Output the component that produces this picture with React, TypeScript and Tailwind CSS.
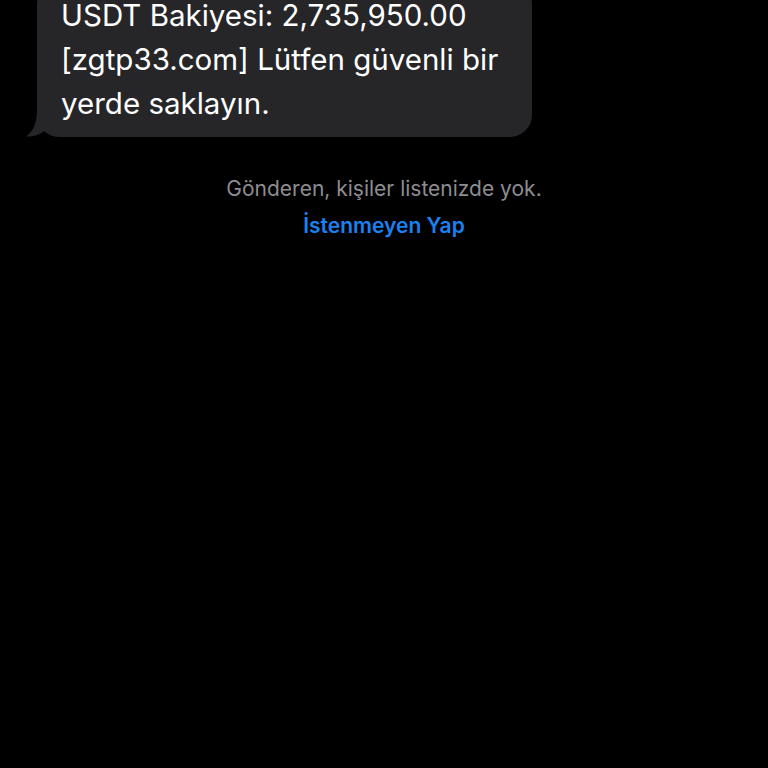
export default function App() {
  return (
    <div className="w-[768px] h-[768px] bg-black overflow-hidden font-['Inter','Liberation_Sans',Arial,sans-serif]">
      {/* 메시지 말풍선 */}
      <div className="pl-[37px] -mt-[17px]">
        <div className="relative w-[495px] rounded-[22px] bg-[#262628] pl-[24px] pr-[20px] pt-[10px] pb-[12px]">
          <p className="text-[29.5px] leading-[44px] text-white">
            USDT Bakiyesi: 2,735,950.00
            <br />
            [zgtp33.com] Lütfen güvenli bir
            <br />
            yerde saklayın.
          </p>
          {/* 꼬리 */}
          <svg
            className="absolute left-[-11px] bottom-0"
            width="30"
            height="26"
            viewBox="0 0 30 26"
          >
            <path
              d="M11 0 C11 10 8 20 0 25.5 C8 26 15 23 20 19 L30 26 L30 0 Z"
              fill="#262628"
            />
          </svg>
        </div>
      </div>

      {/* 안내 문구 */}
      <div className="mt-[39px] flex flex-col items-center">
        <p className="text-[21px] leading-[26px] text-[#8d8d92]">
          Gönderen, kişiler listenizde yok.
        </p>
        <button className="mt-[11px] text-[21px] leading-[26px] font-semibold text-[#1a82f0]">
          İstenmeyen Yap
        </button>
      </div>
    </div>
  );
}
